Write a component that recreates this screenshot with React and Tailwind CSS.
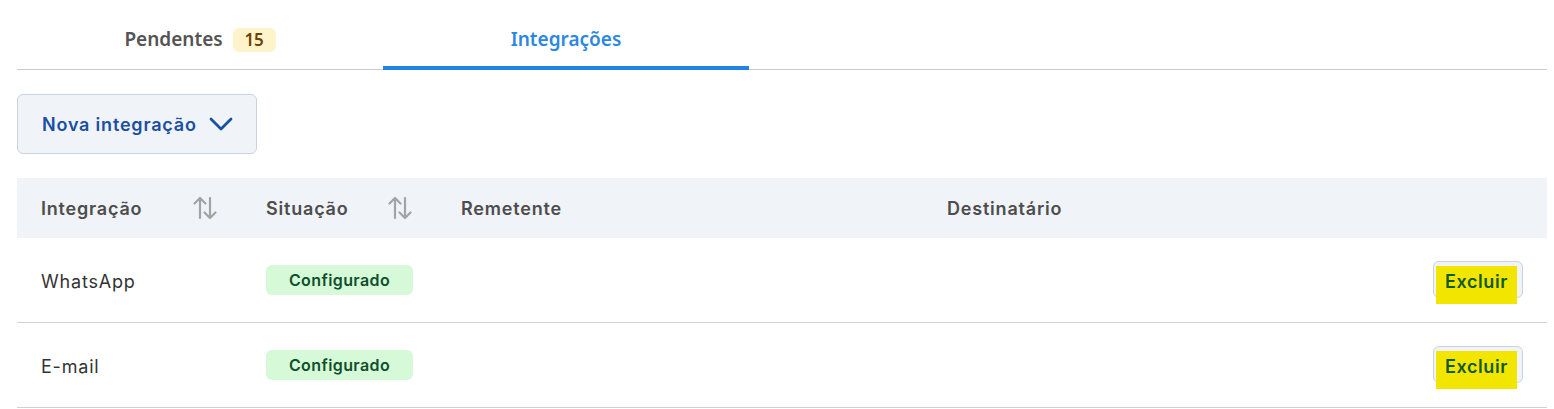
import React from "react";

function SortIcon() {
  return (
    <svg width="26" height="26" viewBox="0 0 26 26" fill="none" stroke="#a3a3a3" strokeWidth="2.2" strokeLinecap="round" strokeLinejoin="round">
      <path d="M8 23V3M2.5 8.5L8 3l5.5 5.5" />
      <path d="M18 3v20M12.5 17.5L18 23l5.5-5.5" />
    </svg>
  );
}

function Chevron() {
  return (
    <svg width="24" height="14" viewBox="0 0 24 14" fill="none" stroke="#1a4fa3" strokeWidth="2.8" strokeLinecap="round" strokeLinejoin="round">
      <path d="M2 2l10 10L22 2" />
    </svg>
  );
}

function Badge() {
  return (
    <span className="inline-flex h-[30px] w-[147px] items-center justify-center rounded-[6px] bg-[#d6f9d7] text-[16px] font-semibold tracking-[0.4px] text-[#0f4f2d]">
      Configurado
    </span>
  );
}

function ExcluirBtn() {
  return (
    <button className="relative mt-[3px] h-[37px] w-[90px] rounded-[6px] border border-[#c9d3df] bg-[#f0f4f9]">
      <span className="absolute left-[2px] top-[4px] flex h-[38px] w-[81px] items-start justify-center bg-[#f2e600] pt-[2px] text-[18px] font-semibold tracking-[0.6px] text-[#0f5a1c]">
        Excluir
      </span>
    </button>
  );
}

function Row({ name }) {
  return (
    <div className="flex h-[85px] items-center border-b border-[#cbd3dc]">
      <div className="w-[225px] pl-[24px] pt-[3px] text-[18px] tracking-[0.8px] text-[#333333]">{name}</div>
      <div className="w-[195px] pl-[24px]"><Badge /></div>
      <div className="w-[486px]" />
      <div className="flex-1" />
      <div className="pr-[24px]"><ExcluirBtn /></div>
    </div>
  );
}

export default function App() {
  return (
    <div className="w-full bg-white pl-[17px] pr-[7px] pt-[12px]" style={{ fontFamily: "Inter, 'Noto Sans', sans-serif" }}>
      <div className="flex border-b border-[#c8ccd2]" style={{ fontFamily: "'Noto Sans', sans-serif" }}>
        <div className="flex h-[57px] w-[366px] items-center justify-center gap-[10px] pb-[2px]">
          <span className="text-[19px] font-semibold text-[#545454]">Pendentes</span>
          <span className="flex h-[24px] w-[43px] items-center justify-center rounded-[6px] bg-[#fff3cc] text-[17px] font-semibold text-[#6e4200]">15</span>
        </div>
        <div className="relative flex h-[57px] w-[366px] items-center justify-center pb-[2px]">
          <span className="text-[19px] font-semibold text-[#2b87e3]">Integrações</span>
          <div className="absolute bottom-[-1px] left-0 right-0 h-[4px] bg-[#2383e2]" />
        </div>
      </div>

      <div className="pt-[24px]">
        <button className="flex h-[60px] w-[240px] items-center gap-[12px] rounded-[6px] border border-[#c9d3df] bg-[#f0f4f9] pl-[24px] text-[18px] font-semibold tracking-[0.8px] text-[#1a4fa3]">
          Nova integração
          <Chevron />
        </button>
      </div>

      <div className="mt-[24px]">
        <div className="flex h-[60px] items-center bg-[#f0f3f8] text-[18px] font-semibold tracking-[0.8px] text-[#4d4d4d]">
          <div className="flex w-[225px] items-center justify-between px-[24px]">
            <span>Integração</span>
            <SortIcon />
          </div>
          <div className="flex w-[195px] items-center justify-between px-[24px]">
            <span>Situação</span>
            <SortIcon />
          </div>
          <div className="w-[486px] px-[24px]">Remetente</div>
          <div className="flex-1 px-[24px]">Destinatário</div>
        </div>
        <Row name="WhatsApp" />
        <Row name="E-mail" />
      </div>
    </div>
  );
}
